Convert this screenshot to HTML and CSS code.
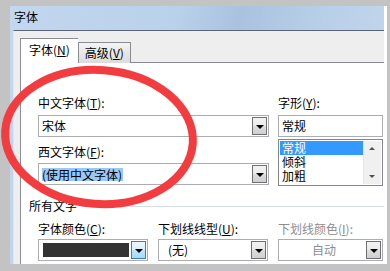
FILE: index.html
```html
<!DOCTYPE html>
<html lang="zh">
<head>
    <meta charset="UTF-8">
    <title>字体</title>
    <link rel="stylesheet" href="styles.css">
</head>
<body>
<div class="window">
    <div class="titlebar">字体</div>
    <div class="client">
        <div class="tabs">
            <div class="tab active">字体(<u>N</u>)</div>
            <div class="tab">高级(<u>V</u>)</div>
        </div>
        <div class="panel">
            <div class="top-row">
                <div class="col-left">
                    <div class="label">中文字体(<u>T</u>):</div>
                    <div class="combo">
                        <span class="combo-text">宋体</span>
                        <span class="drop"></span>
                    </div>
                    <div class="label label-gap">西文字体(<u>F</u>):</div>
                    <div class="combo">
                        <span class="combo-text"><span class="sel">(使用中文字体)</span></span>
                        <span class="drop"></span>
                    </div>
                </div>
                <div class="col-right">
                    <div class="label">字形(<u>Y</u>):</div>
                    <div class="textbox">常规</div>
                    <div class="listbox">
                        <div class="items">
                            <div class="item selected">常规</div>
                            <div class="item">倾斜</div>
                            <div class="item">加粗</div>
                        </div>
                        <div class="scrollbar">
                            <span class="arrow-up"></span>
                            <span class="arrow-down"></span>
                        </div>
                    </div>
                </div>
            </div>

            <div class="group-title">所有文字</div>

            <div class="bottom-row">
                <div class="field w110">
                    <div class="label">字体颜色(<u>C</u>):</div>
                    <div class="combo">
                        <span class="combo-text"><span class="swatch"></span></span>
                        <span class="drop hot"></span>
                    </div>
                </div>
                <div class="field w110">
                    <div class="label">下划线线型(<u>U</u>):</div>
                    <div class="combo">
                        <span class="combo-text pad">(无)</span>
                        <span class="drop"></span>
                    </div>
                </div>
                <div class="field w105">
                    <div class="label disabled">下划线颜色(<u>I</u>):</div>
                    <div class="combo">
                        <span class="combo-text center disabled">自动</span>
                        <span class="drop"></span>
                    </div>
                </div>
            </div>
        </div>
    </div>
</div>

<!-- red hand-drawn mark over the dialog -->
<svg class="mark" width="390" height="271" viewBox="0 0 390 271">
    <ellipse cx="99" cy="137" rx="94" ry="67" transform="rotate(4 99 137)"
             fill="none" stroke="#f23c3f" stroke-width="8"/>
</svg>
</body>
</html>
```

FILE: styles.css
```css
body { margin: 0; background: #c3c3c3; font-family: "Noto Sans CJK SC", "DejaVu Sans", sans-serif; font-size: 12px; color: #000; height: 271px; overflow: hidden; position: relative; }
u { text-decoration: underline; text-underline-offset: 1px; }

.window { margin: 6px 0 0 10px; width: 374px; height: 258px; border-right: 3px solid #fff; background: linear-gradient(100deg, #c3d7ee 0%, #b9d1ea 40%, #aac2de 55%, #b8cfe8 75%, #c6d9ee 100%); display: flex; flex-direction: column; }
.titlebar { height: 24px; line-height: 22px; padding-left: 4px; flex: none; }
.client { flex: 1; margin-left: 3px; background: #eeeeee; border-top: 1px solid #5b6577; border-left: 1px solid #dfe6ef; padding: 8px 0 0 6px; display: flex; flex-direction: column; overflow: hidden; }

.tabs { display: flex; align-items: flex-end; height: 24px; position: relative; z-index: 1; margin-bottom: -1px; }
.tab { height: 20px; line-height: 20px; padding: 0 6px; border: 1px solid #898c95; border-bottom: none; background: linear-gradient(#f3f3f3, #dcdcdc); }
.tab.active { height: 24px; line-height: 22px; padding: 0 8px; background: #fff; border-right: none; }

.panel { flex: 1; background: #fff; border-top: 1px solid #898c95; border-left: 1px solid #898c95; }

.label { height: 16px; line-height: 16px; white-space: nowrap; }
.label.disabled, .disabled { color: #8d8d8d; }

.top-row { display: flex; gap: 9px; padding: 32px 0 0 17px; }
.col-left { width: 231px; }
.col-left .label { margin-bottom: 4px; }
.col-left .label-gap { margin-top: 7px; margin-bottom: 3px; }
.col-right { width: 105px; }
.col-right .label { margin-bottom: 4px; }

.combo { height: 22px; box-sizing: border-box; border: 1px solid #abadb3; display: flex; padding: 1px 0 1px 3px; }
.combo-text { flex: 1; line-height: 18px; display: flex; align-items: center; }
.combo-text.pad { padding-left: 6px; }
.combo-text.center { justify-content: center; }
.sel { background: #99c9f7; line-height: 13px; padding: 0 1px 0 0; }
.swatch { display: block; width: 86px; height: 14px; background: #333333; margin-left: 1px; }

.drop { width: 15px; box-sizing: border-box; border: 1px solid #707070; background: linear-gradient(#f2f2f2, #ebebeb 50%, #dddddd 51%, #cfcfcf); position: relative; margin-right: 1px; }
.drop.hot { border-color: #3c7fb1; background: linear-gradient(#eaf6fd, #d9f0fc 50%, #bee6fd 51%, #a7d9f5); }
.drop::after { content: ""; position: absolute; left: 3px; top: 7px; border-left: 4px solid transparent; border-right: 4px solid transparent; border-top: 4px solid #000; }

.textbox { height: 22px; box-sizing: border-box; border: 1px solid #abadb3; line-height: 20px; padding-left: 3px; }
.listbox { margin-top: 2px; height: 47px; box-sizing: border-box; border: 1px solid #828790; display: flex; padding: 1px; }
.items { flex: 1; }
.item { height: 14px; line-height: 14px; padding-left: 2px; }
.item.selected { background: #3399ff; color: #fff; }
.scrollbar { width: 17px; background: #f0f0f0; border-left: 1px solid #e6e6e6; position: relative; }
.arrow-up, .arrow-down { position: absolute; left: 5px; border-left: 3px solid transparent; border-right: 3px solid transparent; }
.arrow-up { top: 6px; border-bottom: 3px solid #505050; }
.arrow-down { bottom: 6px; border-top: 3px solid #505050; }

.group-title { margin: 12px 0 0 8px; height: 16px; line-height: 16px; display: flex; align-items: center; gap: 4px; }
.group-title::after { content: ""; flex: 1; height: 1px; background: #d5dfe5; }

.bottom-row { display: flex; gap: 10px; padding: 7px 0 0 17px; }
.bottom-row .label { margin-bottom: 2px; }
.w110 { width: 110px; }
.w105 { width: 105px; }

.mark { position: absolute; left: 0; top: 0; pointer-events: none; }
```
